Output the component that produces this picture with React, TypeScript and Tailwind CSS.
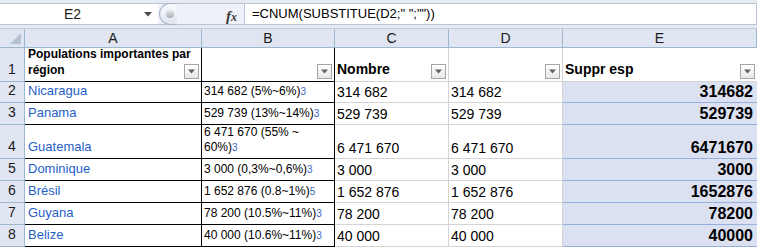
import React from "react";

type Row = {
  n: number;
  a: string;
  b: React.ReactNode;
  ref: string;
  c: string;
  e: string;
  tall?: boolean;
};

const rows: Row[] = [
  { n: 2, a: "Nicaragua", b: "314 682 (5%~6%)", ref: "3", c: "314 682", e: "314682" },
  { n: 3, a: "Panama", b: "529 739 (13%~14%)", ref: "3", c: "529 739", e: "529739" },
  {
    n: 4,
    a: "Guatemala",
    b: (
      <>
        6 471 670 (55% ~
        <br />
        60%)
      </>
    ),
    ref: "3",
    c: "6 471 670",
    e: "6471670",
    tall: true,
  },
  { n: 5, a: "Dominique", b: "3 000 (0,3%~0,6%)", ref: "3", c: "3 000", e: "3000" },
  { n: 6, a: "Brésil", b: "1 652 876 (0.8~1%)", ref: "5", c: "1 652 876", e: "1652876" },
  { n: 7, a: "Guyana", b: "78 200 (10.5%~11%)", ref: "3", c: "78 200", e: "78200" },
  { n: 8, a: "Belize", b: "40 000 (10.6%~11%)", ref: "3", c: "40 000", e: "40000" },
];

const FONT = { fontFamily: '"Liberation Sans", Arial, sans-serif' };

function FilterButton() {
  return (
    <div className="absolute right-[2px] bottom-[2px] w-[15px] h-[15px] border border-[#a5a5a5] bg-gradient-to-b from-[#ffffff] to-[#e6e6e6] flex items-center justify-center">
      <svg width="9" height="5" viewBox="0 0 9 5">
        <path d="M1 0.5h7L4.5 4.5z" fill="#5f6166" />
      </svg>
    </div>
  );
}

export default function App() {
  const headerCell =
    "h-[19px] border-r border-b border-[#9eb6ce] bg-[#dfe5f1] flex items-center justify-center text-[14px] text-[#1b1b1b]";
  const rowHead =
    "border-r border-b border-[#9eb6ce] bg-[#dfe5f1] flex items-end justify-center pb-[1px] text-[14px] text-[#1b1b1b]";

  return (
    <div className="w-[757px] h-[248px] overflow-hidden bg-white" style={FONT}>
      {/* Formula bar */}
      <div className="h-[29px] bg-[#e6ebf3] flex pt-[3px] pb-[3px] border-b border-[#c3cfdf]">
        <div className="w-[158px] h-[22px] bg-white border-y border-[#b9c5d6] flex items-center relative">
          <span className="w-[145px] text-center text-[14px] text-[#1b1b1b]">E2</span>
          <svg className="absolute left-[144px] top-[8px]" width="8" height="5" viewBox="0 0 8 5">
            <path d="M0 0h8L4 4.5z" fill="#4a4a4a" />
          </svg>
        </div>
        <div className="w-[86px] h-[22px] bg-[#eef2f8] border-y border-[#b9c5d6] flex items-center relative">
          <div className="ml-[1px] w-[18px] h-[22px] rounded-l-full border-l border-y border-[#a9b6c8] bg-gradient-to-b from-[#f7f9fc] to-[#dfe5ee] flex items-center justify-center">
            <div className="w-[8px] h-[8px] rounded-full bg-gradient-to-b from-[#e7e9ec] to-[#a9adb3] ml-[3px]" />
          </div>
          <span
            className="absolute left-[68px] top-[1px] text-[15px] italic font-bold text-[#3a3a3a]"
            style={{ fontFamily: '"Liberation Serif", serif' }}
          >
            f<span className="text-[12px]">x</span>
          </span>
        </div>
        <div className="flex-1 h-[22px] bg-white border border-[#b9c5d6] flex items-center pl-[7px] text-[13px] text-black">
          =CNUM(SUBSTITUE(D2;&quot; &quot;;&quot;&quot;))
        </div>
      </div>

      {/* Sheet grid */}
      <div className="grid grid-cols-[25px_177px_133px_114px_114px_1fr] grid-rows-[19px_34px_21px_22px_34px_22px_22px_22px_22px]">
        {/* column headers */}
        <div className={`${headerCell} relative`}>
          <svg className="absolute right-[3px] bottom-[3px]" width="11" height="11" viewBox="0 0 11 11">
            <path d="M11 0V11H0z" fill="#b6c2d2" />
          </svg>
        </div>
        <div className={headerCell}>A</div>
        <div className={headerCell}>B</div>
        <div className={headerCell}>C</div>
        <div className={headerCell}>D</div>
        <div className={headerCell}>E</div>

        {/* row 1 */}
        <div className={rowHead}>1</div>
        <div className="relative border-r border-b border-black pl-[3px] pb-[3px] flex items-end text-[12px] leading-[16px] font-bold text-black">
          <span>
            Populations importantes par
            <br />
            région
          </span>
          <FilterButton />
        </div>
        <div className="relative border-r border-b border-black">
          <FilterButton />
        </div>
        <div className="relative border-r border-b border-[#d4d4d4] pl-[2px] pb-[1px] flex items-end text-[14px] font-bold text-black">
          Nombre
          <FilterButton />
        </div>
        <div className="relative border-r border-b border-[#d4d4d4]">
          <FilterButton />
        </div>
        <div className="relative border-b border-[#d4d4d4] pl-[2px] pb-[1px] flex items-end text-[14px] font-bold text-black">
          Suppr esp
          <FilterButton />
        </div>

        {rows.map((r) => (
          <React.Fragment key={r.n}>
            <div className={rowHead}>{r.n}</div>
            <div className="border-r border-b border-black pl-[3px] pb-[2px] flex items-end text-[13px] text-[#1f5fc9]">
              {r.a}
            </div>
            <div className="border-r border-b border-black pl-[2px] pb-[3px] flex items-end text-[12px] leading-[15px] text-black">
              <span>
                {r.b}
                <span className="text-[10px] text-[#3a66c4]">{r.ref}</span>
              </span>
            </div>
            <div className="border-r border-b border-[#d4d4d4] pl-[2px] flex items-end text-[14px] leading-[20px] text-black">
              {r.c}
            </div>
            <div className="border-r border-b border-[#d4d4d4] pl-[2px] flex items-end text-[14px] leading-[20px] text-black">
              {r.c}
            </div>
            <div className="bg-[#dce1f2] border-b border-[#95b0dc] pr-[4px] flex items-end justify-end text-[16px] leading-[20px] font-bold text-black">
              {r.e}
            </div>
          </React.Fragment>
        ))}
      </div>
    </div>
  );
}
